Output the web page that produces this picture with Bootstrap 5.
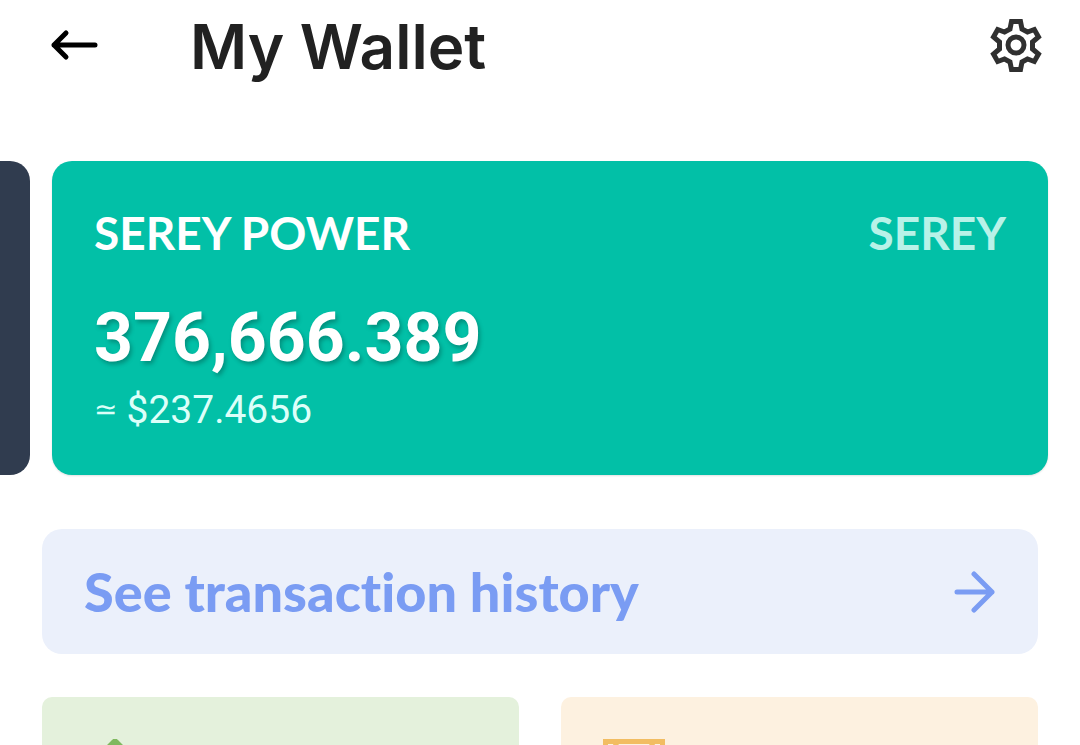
<!DOCTYPE html>
<html lang="en">
<head>
<meta charset="utf-8">
<meta name="viewport" content="width=device-width, initial-scale=1">
<title>My Wallet</title>
<link href="https://cdn.jsdelivr.net/npm/bootstrap@5.3.0/dist/css/bootstrap.min.css" rel="stylesheet">
<style>
  body { font-family: Inter, "Liberation Sans", sans-serif; background: #fff; color: #212121; }
  .wallet { height: 100vh; }
  .topbar { height: 94px; padding: 0 36px 0 48px; }
  .icon-btn { line-height: 0; }
  .title { font-size: 62px; line-height: 90px; font-weight: 600; margin-left: 90px; }
  .cards { margin-top: 67px; padding-right: 32px; gap: 22px; }
  .peek { width: 30px; background: #303c4f; border-radius: 0 20px 20px 0; }
  .power { background: #02c0a7; border-radius: 20px; padding: 42px; height: 314px; color: #fff; box-shadow: 0 1px 2px rgba(0,0,0,.12); }
  .label { font-family: Lato, sans-serif; font-size: 46px; line-height: 60px; font-weight: 700; }
  .unit { color: #b8f2e8; }
  .amount { font-family: Roboto, sans-serif; font-size: 68px; line-height: 80px; font-weight: 700; margin-top: 35px; text-shadow: 2px 3px 4px rgba(0,0,0,.25); }
  .fiat { font-family: Roboto, sans-serif; font-size: 39px; line-height: 48px; color: #dcfff9; margin-top: 8px; gap: 9px; }
  .approx { font-family: "DejaVu Sans", sans-serif; font-size: 28px; }
  .history { margin: 54px 42px 0; padding: 0 42px; height: 125px; border-radius: 20px; background: #ebf0fb; color: #7a9cf3; font-family: Lato, sans-serif; font-size: 54px; font-weight: 900; font-variant-ligatures: none; }
  .history:hover { color: #6c90ee; }
  .tiles { margin: 43px 42px 0; gap: 42px; }
  .tile { flex: 1 1 0; height: 240px; border: 0; border-radius: 10px; padding: 42px; }
  .send { background: #e4f1dc; color: #7fb95f; }
  .voucher { background: #fdf1e0; color: #f2bd62; }
</style>
</head>
<body>
<div class="wallet overflow-hidden">
  <header class="topbar d-flex align-items-center">
    <button class="icon-btn btn p-0 border-0" type="button" aria-label="Back">
      <svg width="52" height="38" viewBox="0 0 52 38" fill="none" stroke="#000" stroke-width="5" stroke-linecap="round" stroke-linejoin="round"><path d="M47 17H6M18 5L6 17L18 29"/></svg>
    </button>
    <h1 class="title mb-0">My Wallet</h1>
    <button class="icon-btn btn p-0 border-0 ms-auto" type="button" aria-label="Settings">
      <svg width="56" height="60" viewBox="0 0 56 60" fill="none" stroke="#303030" stroke-width="5" stroke-linejoin="miter"><path d="M23.500 4.500H32.500L34 12L39.500 15L46.300 12.500L50.500 20L44.500 25V32L50.500 37L46.300 44.500L39.500 42L34 45L32.500 52.500H23.500L22 45L16.500 42L9.700 44.500L5.500 37L11.500 32V25L5.500 20L9.700 12.500L16.500 15L22 12Z"/><circle cx="28" cy="28" r="8"/></svg>
    </button>
  </header>
  <main>
    <section class="cards d-flex" aria-label="Balances">
      <div class="peek flex-shrink-0"></div>
      <article class="power flex-grow-1">
        <div class="label d-flex justify-content-between"><span>SEREY POWER</span><span class="unit">SEREY</span></div>
        <div class="amount">376,666.389</div>
        <div class="fiat d-flex align-items-center"><span class="approx">≃</span><span>$237.4656</span></div>
      </article>
    </section>
    <a class="history d-flex align-items-center justify-content-between text-decoration-none" href="#history">
      <span>See transaction history</span>
      <svg width="42" height="42" viewBox="0 0 42 42" fill="none" stroke="currentColor" stroke-width="5" stroke-linecap="round" stroke-linejoin="round"><path d="M3 21H38M20 3L38 21L20 39"/></svg>
    </a>
    <div class="tiles d-flex">
      <button class="tile send d-flex align-items-start" type="button" aria-label="Send">
        <svg width="62" height="62" viewBox="0 0 62 62" fill="currentColor"><path d="M28 1Q31 -2 34 1L58 25L50 32L36 18V60H26V18L12 32L4 25Z"/></svg>
      </button>
      <button class="tile voucher d-flex align-items-start" type="button" aria-label="Vouchers">
        <svg width="62" height="62" viewBox="0 0 62 62" fill="none" stroke="currentColor" stroke-width="5"><path d="M2.500 2.500H59.500V59.500H2.500ZM14 2Q12 12 3 14M48 2Q50 12 59 14"/></svg>
      </button>
    </div>
  </main>
</div>
<script src="https://cdn.jsdelivr.net/npm/bootstrap@5.3.0/dist/js/bootstrap.bundle.min.js"></script>
</body>
</html>
